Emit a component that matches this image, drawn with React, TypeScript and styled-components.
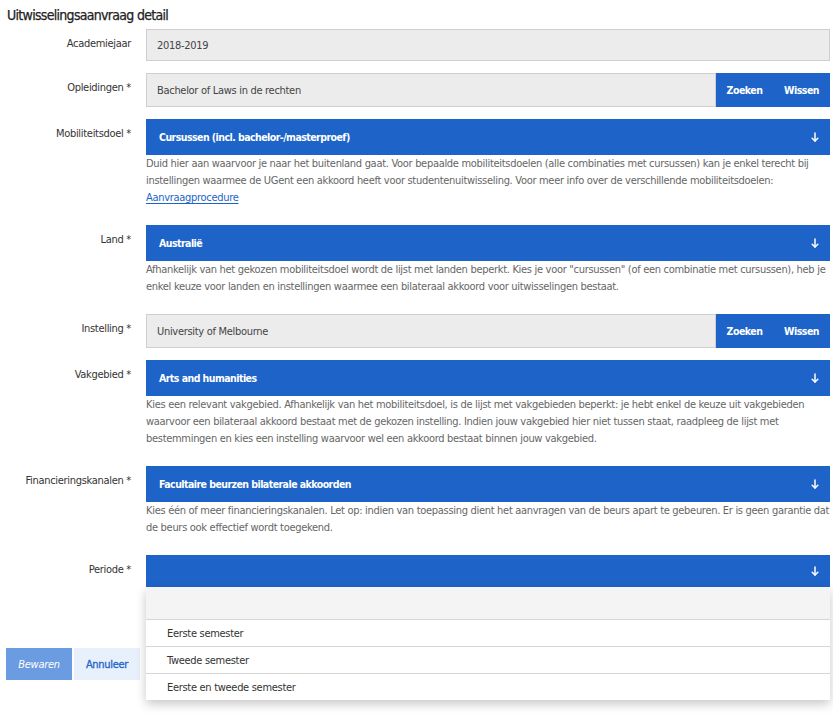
import styled, { createGlobalStyle } from 'styled-components'
import type { ReactNode } from 'react'

const GlobalStyle = createGlobalStyle`
    html, body {
        margin: 0;
        padding: 0;
        background: #fff;
    }
    body {
        font-family: 'DejaVu Sans Condensed', 'Liberation Sans', sans-serif;
        font-size: 11px;
        letter-spacing: -0.3px;
        color: #333;
    }
`

interface Field {
    label: string
    kind: 'input' | 'search' | 'select'
    value?: string
    help?: ReactNode
    open?: boolean
}

const periodes = ['Eerste semester', 'Tweede semester', 'Eerste en tweede semester']

// velden worden pas opgebouwd bij render (HelpLink staat onderaan)
const getFields = (): Field[] => [
    { label: 'Academiejaar', kind: 'input', value: '2018-2019' },
    { label: 'Opleidingen *', kind: 'search', value: 'Bachelor of Laws in de rechten' },
    {
        label: 'Mobiliteitsdoel *',
        kind: 'select',
        value: 'Cursussen (incl. bachelor-/masterproef)',
        help: (
            <>
                Duid hier aan waarvoor je naar het buitenland gaat. Voor bepaalde mobiliteitsdoelen (alle combinaties met cursussen) kan je enkel terecht bij instellingen waarmee de UGent een akkoord heeft voor studentenuitwisseling. Voor meer info over de verschillende mobiliteitsdoelen:<br />
                <HelpLink href="#">Aanvraagprocedure</HelpLink>
            </>
        ),
    },
    {
        label: 'Land *',
        kind: 'select',
        value: 'Australië',
        help: 'Afhankelijk van het gekozen mobiliteitsdoel wordt de lijst met landen beperkt. Kies je voor "cursussen" (of een combinatie met cursussen), heb je enkel keuze voor landen en instellingen waarmee een bilateraal akkoord voor uitwisselingen bestaat.',
    },
    { label: 'Instelling *', kind: 'search', value: 'University of Melbourne' },
    {
        label: 'Vakgebied *',
        kind: 'select',
        value: 'Arts and humanities',
        help: 'Kies een relevant vakgebied. Afhankelijk van het mobiliteitsdoel, is de lijst met vakgebieden beperkt: je hebt enkel de keuze uit vakgebieden waarvoor een bilateraal akkoord bestaat met de gekozen instelling. Indien jouw vakgebied hier niet tussen staat, raadpleeg de lijst met bestemmingen en kies een instelling waarvoor wel een akkoord bestaat binnen jouw vakgebied.',
    },
    {
        label: 'Financieringskanalen *',
        kind: 'select',
        value: 'Facultaire beurzen bilaterale akkoorden',
        help: 'Kies één of meer financieringskanalen. Let op: indien van toepassing dient het aanvragen van de beurs apart te gebeuren. Er is geen garantie dat de beurs ook effectief wordt toegekend.',
    },
    { label: 'Periode *', kind: 'select', value: '', open: true },
]

const DownArrow = () => (
    <svg width="8" height="10" viewBox="0 0 8 10" fill="none" stroke="#fff" strokeWidth="1.5" strokeLinecap="round" strokeLinejoin="round">
        <path d="M4 1v8" />
        <path d="M1.2 6.2L4 9l2.8-2.8" />
    </svg>
)

const App = () => {
    const fields = getFields()
    return (
        <Page>
            <GlobalStyle />
            <Title>Uitwisselingsaanvraag detail</Title>
            <Form>
                { fields.map(f => (
                    <Row key={f.label} $spaced={!!f.help}>
                        <Label>{ f.label }</Label>
                        <Control>
                            { f.kind === 'input' && <TextBox>{ f.value }</TextBox> }
                            { f.kind === 'search' && (
                                <SearchGroup>
                                    <TextBox $tall>{ f.value }</TextBox>
                                    <BlueButton>Zoeken</BlueButton>
                                    <BlueButton>Wissen</BlueButton>
                                </SearchGroup>
                            ) }
                            { f.kind === 'select' && (
                                <SelectBox $empty={!f.value}>
                                    <span>{ f.value }</span>
                                    <DownArrow />
                                </SelectBox>
                            ) }
                            { f.help && <Help>{ f.help }</Help> }
                            { f.open && (
                                <Dropdown>
                                    <Option $blank />
                                    { periodes.map(p => <Option key={p}>{ p }</Option>) }
                                </Dropdown>
                            ) }
                        </Control>
                    </Row>
                )) }
            </Form>
            <Actions>
                <SaveButton>Bewaren</SaveButton>
                <CancelButton>Annuleer</CancelButton>
            </Actions>
        </Page>
    )
}

export default App

// 样式组件
const Page = styled.div`
    width: 833px;
    min-height: 721px;
    box-sizing: border-box;
    padding: 5px 3px 0 0;
`
const Title = styled.h1`
    margin: 0 0 4px 7px;
    font-size: 14px;
    line-height: 20px;
    font-weight: 400;
    letter-spacing: -0.7px;
    color: #222;
    -webkit-text-stroke: 0.25px #222;
`
const Form = styled.div`
    display: flex;
    flex-direction: column;
`
const Row = styled.div<{ $spaced?: boolean }>`
    display: grid;
    grid-template-columns: 131px 1fr;
    column-gap: 15px;
    margin-bottom: ${props => props.$spaced ? '19px' : '12px'};
`
const Label = styled.div`
    text-align: right;
    padding-top: 6px;
    line-height: 17px;
    color: #333;
    white-space: nowrap;
`
const Control = styled.div`
    position: relative;
    min-width: 0;
`
const TextBox = styled.div<{ $tall?: boolean }>`
    flex: 1;
    box-sizing: border-box;
    height: ${props => props.$tall ? '34px' : '32px'};
    display: flex;
    align-items: center;
    padding: 0 10px;
    background: #ececec;
    border: 1px solid #cfcfcf;
    color: #444;
`
const SearchGroup = styled.div`
    display: flex;
`
const BlueButton = styled.div`
    width: 57px;
    height: 34px;
    display: flex;
    align-items: center;
    justify-content: center;
    background: #1e64c8;
    color: #fff;
    font-size: 10.5px;
    font-weight: 700;
    letter-spacing: -0.5px;
`
const SelectBox = styled.div<{ $empty?: boolean }>`
    box-sizing: border-box;
    height: ${props => props.$empty ? '32px' : '36px'};
    display: flex;
    align-items: center;
    justify-content: space-between;
    padding: 0 11px 0 13px;
    background: #1e64c8;
    color: #fff;
    font-size: 10.5px;
    font-weight: 700;
    letter-spacing: -0.55px;
`
const Help = styled.div`
    line-height: 17px;
    color: #666;
`
const HelpLink = styled.a`
    color: #1e64c8;
    text-decoration: underline;
    text-underline-offset: 2px;
`
const Dropdown = styled.div`
    position: absolute;
    top: 32px;
    left: 0;
    right: 0;
    background: #fff;
    box-shadow: 0 4px 10px rgba(0, 0, 0, 0.22);
    z-index: 2;
`
const Option = styled.div<{ $blank?: boolean }>`
    box-sizing: border-box;
    height: ${props => props.$blank ? '32px' : '27px'};
    display: flex;
    align-items: center;
    padding-left: 21px;
    background: ${props => props.$blank ? '#f4f4f4' : '#fff'};
    color: #333;
    & + & {
        border-top: 1px solid #d6d6d6;
    }
`
const Actions = styled.div`
    display: flex;
    gap: 2px;
    margin: 49px 0 0 6px;
`
const SaveButton = styled.div`
    width: 66px;
    height: 32px;
    display: flex;
    align-items: center;
    justify-content: center;
    background: #6b9be0;
    color: #fff;
    font-style: italic;
`
const CancelButton = styled.div`
    width: 66px;
    height: 32px;
    display: flex;
    align-items: center;
    justify-content: center;
    background: #e8f0fb;
    color: #1e64c8;
    -webkit-text-stroke: 0.3px #1e64c8;
`
